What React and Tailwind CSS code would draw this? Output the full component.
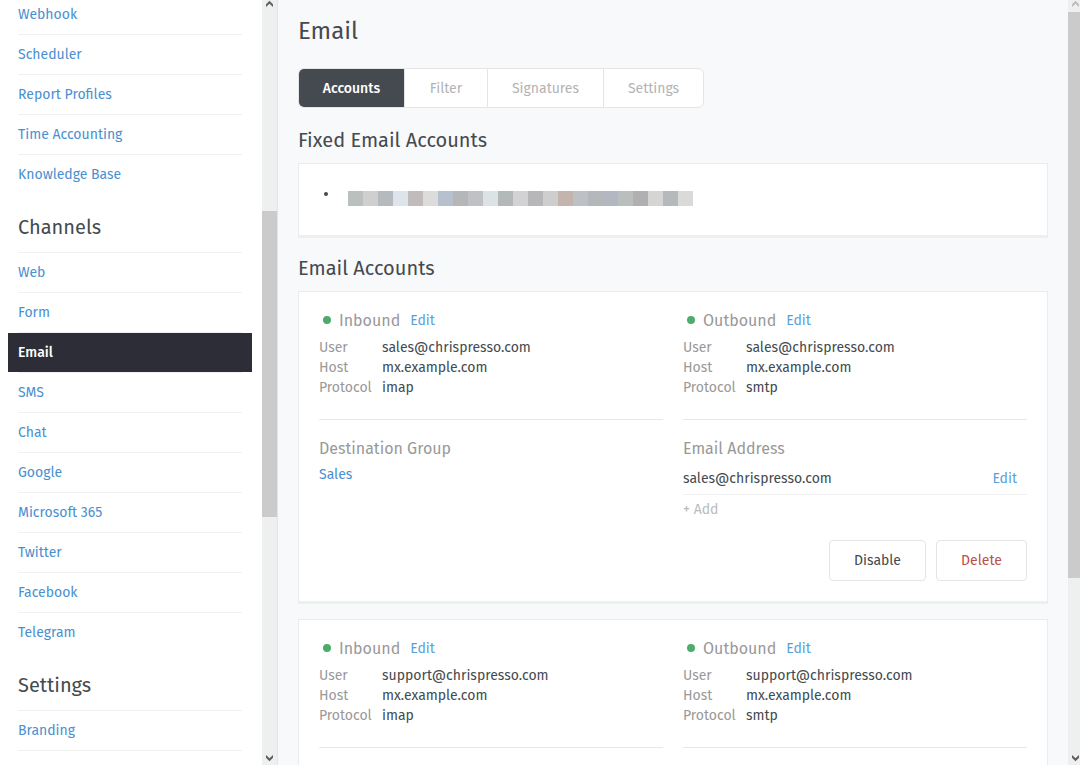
import React from "react";

const automation = ["Webhook", "Scheduler", "Report Profiles", "Time Accounting", "Knowledge Base"];
const channels = ["Web", "Form", "Email", "SMS", "Chat", "Google", "Microsoft 365", "Twitter", "Facebook", "Telegram"];
const tabs = [
  { label: "Accounts", width: "w-[106px]" },
  { label: "Filter", width: "w-[83px]" },
  { label: "Signatures", width: "w-[116px]" },
  { label: "Settings", width: "w-[99px]" },
];
const mosaic = [
  "#bbc0bf", "#cfcfd0", "#b5babe", "#dde4eb", "#c2bbbb", "#dcdcda", "#b7c0cd", "#b5b6b8",
  "#c0c1c5", "#dbe3e5", "#b3b9b8", "#d2d2d4", "#b7b7b9", "#cecece", "#c3b5ae", "#bdc0c5",
  "#b4b8bb", "#b3b7c1", "#babfbd", "#b0b0b2", "#d5d5d3", "#b5b9bc", "#dadad8",
];

function NavGroup({ title, items, active }) {
  return (
    <section className="border-b border-transparent">
      {title && (
        <h2 className="flex h-[58px] items-center border-b border-[#f0f0f0] pt-1.5 text-xl text-[#444a4f]">{title}</h2>
      )}
      <ul className="-mb-px">
        {items.map((item) => (
          <li
            key={item}
            className={
              item === "Knowledge Base" || item === "Telegram"
                ? "h-10 border-b border-transparent"
                : "h-10 border-b border-[#f0f0f0]"
            }
          >
            <a
              href="#"
              aria-current={item === active ? "page" : undefined}
              className={
                item === active
                  ? "-mx-2.5 flex h-full items-center bg-[#2c2d36] px-2.5 font-medium text-white"
                  : "flex h-full items-center text-[#4a90d0]"
              }
            >
              {item}
            </a>
          </li>
        ))}
      </ul>
    </section>
  );
}

function Arrow({ down, color }) {
  return (
    <svg viewBox="0 0 9 8" className="h-2 w-[9px] shrink-0" fill={color} aria-hidden="true">
      <path d={down ? "M1 1v2.7L4.5 7.2 8 3.7V1L4.5 4.3z" : "M1 7V4.3L4.5.8 8 4.3V7L4.5 3.7z"} />
    </svg>
  );
}

function AccountSide({ title, rows }) {
  return (
    <div className="flex-1 border-b border-[#e6e8e9] pt-[17px] pb-[21px]">
      <div className="flex h-6 items-center">
        <span className="mr-2 mb-0.5 ml-1 size-2 rounded-full bg-[#4fab6b]" />
        <h3 className="mr-2.5 text-base text-[#999]">{title}</h3>
        <a href="#" className="text-[#5a9fdc]">Edit</a>
      </div>
      <dl className="mt-[5px] grid grid-cols-[63px_1fr] leading-5">
        {rows.map(([k, v]) => (
          <React.Fragment key={k}>
            <dt className="text-[#999]">{k}</dt>
            <dd className="text-[#444a4f]">{v}</dd>
          </React.Fragment>
        ))}
      </dl>
    </div>
  );
}

function AccountCard({ email, group }) {
  return (
    <article className="mb-[15px] border border-b-3 border-[#e6eef0] border-b-[#edf0f0] bg-white px-5 pb-5">
      <div className="flex gap-5">
        <AccountSide title="Inbound" rows={[["User", email], ["Host", "mx.example.com"], ["Protocol", "imap"]]} />
        <AccountSide title="Outbound" rows={[["User", email], ["Host", "mx.example.com"], ["Protocol", "smtp"]]} />
      </div>
      {group && (
        <>
          <div className="flex gap-5 pt-[17px]">
            <div className="flex-1">
              <h3 className="text-base text-[#999]">Destination Group</h3>
              <a href="#" className="mt-1 block leading-5 text-[#4a90d0]">{group}</a>
            </div>
            <div className="flex-1">
              <h3 className="text-base text-[#999]">Email Address</h3>
              <table className="mt-0.5 w-full text-[#444a4f]">
                <tbody>
                  <tr className="h-[31px] border-b border-[#f0f0f0]">
                    <td className="pt-px">{email}</td>
                    <td className="pt-px pr-2.5 text-right"><a href="#" className="text-[#5a9fdc]">Edit</a></td>
                  </tr>
                </tbody>
              </table>
              <button type="button" className="mt-[5px] block leading-5 text-[#bbb]">+ Add</button>
            </div>
          </div>
          <div className="mt-5 flex justify-end gap-2.5">
            <button type="button" className="h-[41px] w-[97px] rounded-sm border border-[#e4e5e6] bg-white pt-0.5 text-[#444a4f]">Disable</button>
            <button type="button" className="h-[41px] w-[91px] rounded-sm border border-[#e4e5e6] bg-white pt-0.5 text-[#b8504b]">Delete</button>
          </div>
        </>
      )}
    </article>
  );
}

export default function App() {
  return (
    <div className="flex h-screen overflow-hidden bg-[#f8f9fb] font-['Fira_Sans','Noto_Sans',sans-serif] text-sm">
      <nav className="w-[262px] shrink-0 bg-white px-[18px] pr-5">
        <div className="-mt-[5px]">
          <NavGroup items={automation} />
          <NavGroup title="Channels" items={channels} active="Email" />
          <NavGroup title="Settings" items={["Branding"]} />
        </div>
      </nav>
      <div className="flex w-4 shrink-0 flex-col items-center border-r border-[#e2e4e5] bg-[#eef0f0]">
        <Arrow color="#5f6163" />
        <div className="mt-[203px] h-[306px] w-full bg-[#cbcbcb]" />
        <div className="mt-auto mb-[3px] flex">
          <Arrow down color="#5f5c5e" />
        </div>
      </div>
      <main className="min-w-0 flex-1 px-5">
        <h1 className="pt-[15px] text-2xl leading-8 text-[#444a4f]">Email</h1>
        <div role="tablist" className="mt-[21px] flex h-10 w-fit overflow-hidden rounded-md border border-[#e4e5e6] bg-white">
          {tabs.map((t, i) => (
            <button
              key={t.label}
              type="button"
              role="tab"
              aria-selected={i === 0}
              className={`${t.width} border-r border-[#e4e5e6] pt-0.5 last:border-r-0 ${
                i === 0 ? "bg-[#444a4f] font-medium text-white" : "text-[#b3b3b3]"
              }`}
            >
              {t.label}
            </button>
          ))}
        </div>
        <h2 className="mt-[18px] text-xl text-[#444a4f]">Fixed Email Accounts</h2>
        <div className="mt-[9px] border border-b-3 border-[#e6eef0] border-b-[#edf0f0] bg-white px-[25px] pt-[27px] pb-[29px]">
          <ul>
            <li className="flex">
              <span className="mt-px mr-5 size-1 rounded-full bg-[#444a4f]" />
              <span className="flex">
                {mosaic.map((c, i) => (
                  <span key={i} className="size-[15px]" style={{ backgroundColor: c }} />
                ))}
              </span>
            </li>
          </ul>
        </div>
        <h2 className="mt-4 text-xl text-[#444a4f]">Email Accounts</h2>
        <div className="mt-[9px]">
          <AccountCard email="sales@chrispresso.com" group="Sales" />
          <AccountCard email="support@chrispresso.com" />
        </div>
      </main>
      <div className="flex w-3 shrink-0 flex-col bg-[#eef0f0] pl-[3px]">
        <Arrow color="#bcbebe" />
        <div className="-ml-[3px] mt-1 h-[566px] bg-[#cbcbcb]" />
        <div className="mt-auto mb-[3px] flex">
          <Arrow down color="#5f5c5e" />
        </div>
      </div>
    </div>
  );
}
